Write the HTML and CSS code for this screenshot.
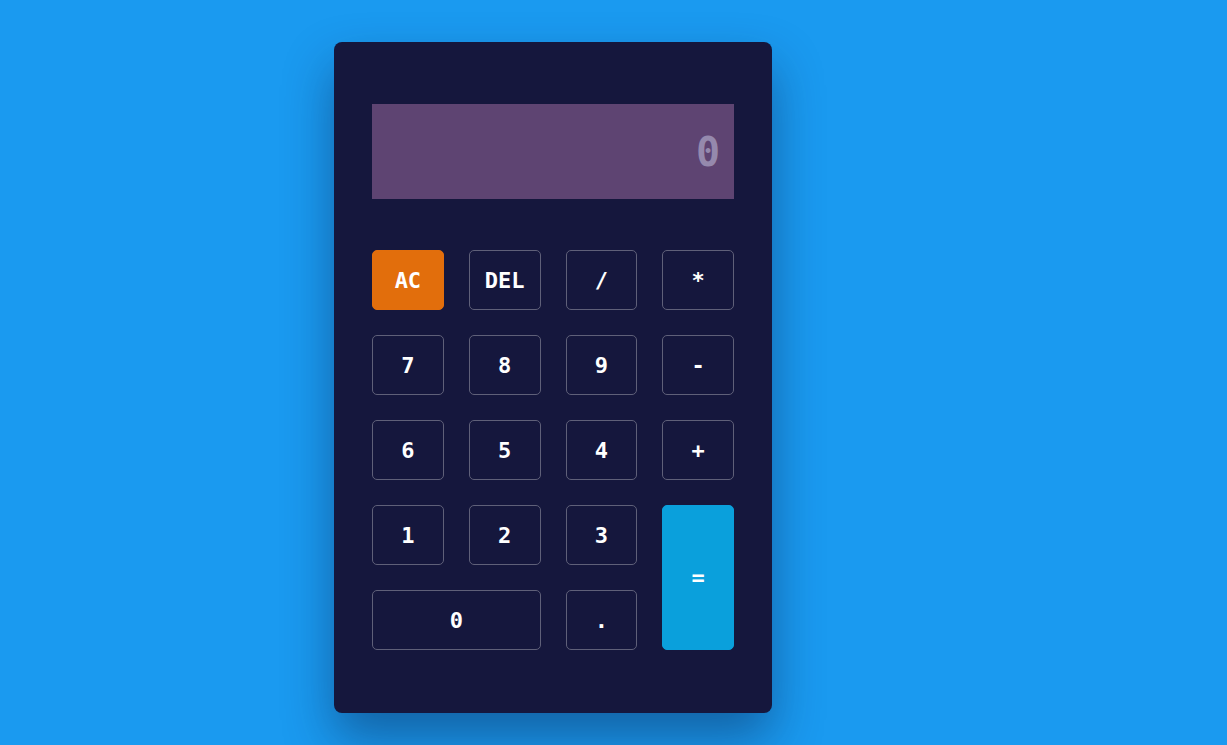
FILE: index.html
```html
<!DOCTYPE html>
<html>
<head>
<meta charset="utf-8">
<link rel="stylesheet" href="styles.css">
</head>
<body>
<div class="calc">
  <div class="display">0</div>
  <div class="keys">
    <button class="key ac">AC</button>
    <button class="key">DEL</button>
    <button class="key">/</button>
    <button class="key">*</button>
    <button class="key">7</button>
    <button class="key">8</button>
    <button class="key">9</button>
    <button class="key">-</button>
    <button class="key">6</button>
    <button class="key">5</button>
    <button class="key">4</button>
    <button class="key">+</button>
    <button class="key">1</button>
    <button class="key">2</button>
    <button class="key">3</button>
    <button class="key eq">=</button>
    <button class="key zero">0</button>
    <button class="key">.</button>
  </div>
</div>
</body>
</html>
```
FILE: styles.css
```css
html, body {
  margin: 0;
  height: 100%;
}
body {
  background: #1a9af0;
  padding: 42px 0 0 334px;
  box-sizing: border-box;
  font-family: "DejaVu Sans Mono", "Liberation Mono", monospace;
}
.calc {
  width: 438px;
  box-sizing: border-box;
  padding: 62px 38px 63px 38px;
  background: #15173d;
  border-radius: 8px;
  box-shadow: 0 25px 50px rgba(10, 30, 70, 0.45);
}
.display {
  height: 95px;
  background: #5e4472;
  color: #9589ad;
  font-size: 40px;
  font-weight: bold;
  display: flex;
  align-items: center;
  justify-content: flex-end;
  padding-right: 14px;
}
.keys {
  margin-top: 51px;
  display: grid;
  grid-template-columns: repeat(4, 1fr);
  grid-auto-rows: 60px;
  gap: 25px;
}
.key {
  background: transparent;
  border: 1px solid #5f6079;
  border-radius: 5px;
  color: #ffffff;
  font-family: inherit;
  font-size: 22px;
  font-weight: bold;
  padding: 0;
}
.ac {
  background: #e26e0c;
  border-color: #e26e0c;
}
.eq {
  background: #0aa0dc;
  border-color: #0aa0dc;
  grid-row: span 2;
}
.zero {
  grid-column: span 2;
}
```
